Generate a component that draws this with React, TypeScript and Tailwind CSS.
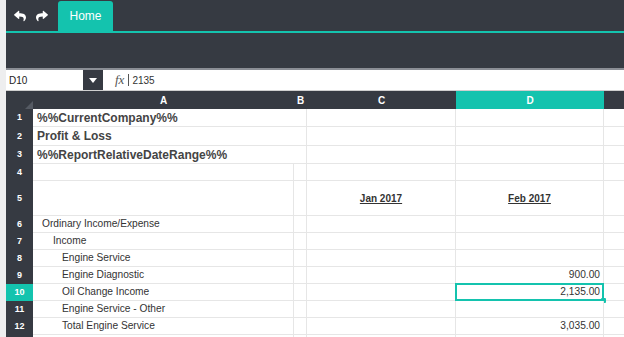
import React from 'react';
import { FaReply, FaShare } from 'react-icons/fa';

const COLS = [261, 13, 149, 148, 20];

type Row = {
  n: number;
  h: number;
  a?: string;
  bold?: boolean;
  indent?: number;
  merged?: boolean;
  c?: string;
  d?: string;
  dHead?: boolean;
  selected?: boolean;
  hideNum?: boolean;
};

const rows: Row[] = [
  { n: 1, h: 18, a: '%%CurrentCompany%%', bold: true, merged: true },
  { n: 2, h: 19, a: 'Profit & Loss', bold: true, merged: true },
  { n: 3, h: 18, a: '%%ReportRelativeDateRange%%', bold: true, merged: true },
  { n: 4, h: 17 },
  { n: 5, h: 35, c: 'Jan 2017', d: 'Feb 2017', dHead: true },
  { n: 6, h: 17, a: 'Ordinary Income/Expense', indent: 9 },
  { n: 7, h: 17, a: 'Income', indent: 20 },
  { n: 8, h: 17, a: 'Engine Service', indent: 29 },
  { n: 9, h: 17, a: 'Engine Diagnostic', indent: 29, d: '900.00' },
  { n: 10, h: 17, a: 'Oil Change Income', indent: 29, d: '2,135.00', selected: true },
  { n: 11, h: 17, a: 'Engine Service - Other', indent: 29 },
  { n: 12, h: 17, a: 'Total Engine Service', indent: 29, d: '3,035.00' },
  { n: 13, h: 17, hideNum: true },
];

function SheetRow({ r }: { r: Row }) {
  return (
    <div className="flex" style={{ height: r.h }}>
      <div
        className={`w-[27px] shrink-0 flex items-center justify-center text-[9px] font-bold text-white ${
          r.selected ? 'bg-[#14c3ae]' : 'bg-[#363a42]'
        }`}
      >
        {r.hideNum ? null : r.n}
      </div>
      {r.merged ? (
        <div className="w-[274px] shrink-0 border-r border-b border-[#e6e6e6] bg-white flex items-center pl-[4px] text-[12px] font-bold text-[#444] whitespace-nowrap">
          {r.a}
        </div>
      ) : (
        <>
          <div
            className="w-[261px] shrink-0 border-r border-b border-[#e6e6e6] bg-white flex items-center text-[10.2px] text-[#333] whitespace-nowrap"
            style={{ paddingLeft: r.indent ?? 4 }}
          >
            {r.a}
          </div>
          <div className="w-[13px] shrink-0 border-r border-b border-[#e6e6e6] bg-white" />
        </>
      )}
      <div className="w-[149px] shrink-0 border-r border-b border-[#e6e6e6] bg-white flex items-end justify-center pb-[9px] text-[10px] font-bold underline text-[#333]">
        {r.c}
      </div>
      <div className="relative w-[148px] shrink-0 border-r border-b border-[#e6e6e6] bg-white">
        {r.dHead ? (
          <div className="h-full flex items-end justify-center pb-[9px] text-[10px] font-bold underline text-[#333]">
            {r.d}
          </div>
        ) : (
          <div className="h-full flex items-center justify-end pr-[3px] text-[10.2px] text-[#333]">{r.d}</div>
        )}
        {r.selected && (
          <>
            <div className="absolute left-[-1px] top-[-1px] right-[-1px] bottom-[-1px] border-2 border-[#14c3ae]" />
            <div className="absolute right-[-3px] bottom-[-3px] w-[5px] h-[5px] rounded-[1px] bg-[#14c3ae]" />
          </>
        )}
      </div>
      <div className="w-[20px] shrink-0 border-b border-[#e6e6e6] bg-white" />
    </div>
  );
}

export default function App() {
  return (
    <div
      className="w-[624px] h-[337px] overflow-hidden bg-[#eeeeef] pl-[6px]"
      style={{ fontFamily: '"Liberation Sans", Arial, sans-serif' }}
    >
      {/* Toolbar */}
      <div className="bg-[#363a42]">
        <div className="h-[33px] flex items-end border-b-[2px] border-[#14c3ae]">
          <div className="flex items-center gap-[10px] h-[31px] pl-[8px] pr-[10px] text-white">
            <FaReply className="w-[12px] h-[12px]" />
            <FaShare className="w-[12px] h-[12px]" />
          </div>
          <div className="w-[55px] h-[30px] rounded-t-[3px] bg-[#14c3ae] flex items-center justify-center text-[12px] text-white">
            Home
          </div>
        </div>
        <div className="h-[37px] border-b-[2px] border-[#8b8e95]" />
      </div>

      {/* Formula bar */}
      <div className="h-[21px] flex bg-white border-b border-[#cfcfcf]">
        <div className="w-[77px] flex items-center pl-[3px] text-[10px] text-[#222]">D10</div>
        <div className="w-[20px] bg-[#363a42] flex items-center justify-center">
          <div className="w-0 h-0 border-l-[4px] border-r-[4px] border-t-[5px] border-l-transparent border-r-transparent border-t-white" />
        </div>
        <div className="flex items-center pl-[12px]">
          <span
            className="text-[13px] italic text-[#555]"
            style={{ fontFamily: '"Liberation Serif", "Times New Roman", serif' }}
          >
            fx
          </span>
          <div className="w-px h-[12px] bg-[#555] ml-[4px] mr-[3px]" />
          <span className="text-[10px] text-[#333]">2135</span>
        </div>
      </div>

      {/* Column headers */}
      <div className="flex h-[18px] bg-[#363a42] text-[10px] font-bold text-white">
        <div className="relative w-[27px] shrink-0">
          <div
            className="absolute right-0 bottom-0 w-[8px] h-[8px] bg-[#555a63]"
            style={{ clipPath: 'polygon(100% 0, 100% 100%, 0 100%)' }}
          />
        </div>
        <div className="flex items-center justify-center" style={{ width: COLS[0] }}>A</div>
        <div className="flex items-center justify-center" style={{ width: COLS[1] }}>B</div>
        <div className="flex items-center justify-center" style={{ width: COLS[2] }}>C</div>
        <div className="flex items-center justify-center bg-[#14c3ae]" style={{ width: COLS[3] }}>D</div>
        <div style={{ width: COLS[4] }} />
      </div>

      {rows.map((r) => (
        <SheetRow key={r.n} r={r} />
      ))}
    </div>
  );
}
